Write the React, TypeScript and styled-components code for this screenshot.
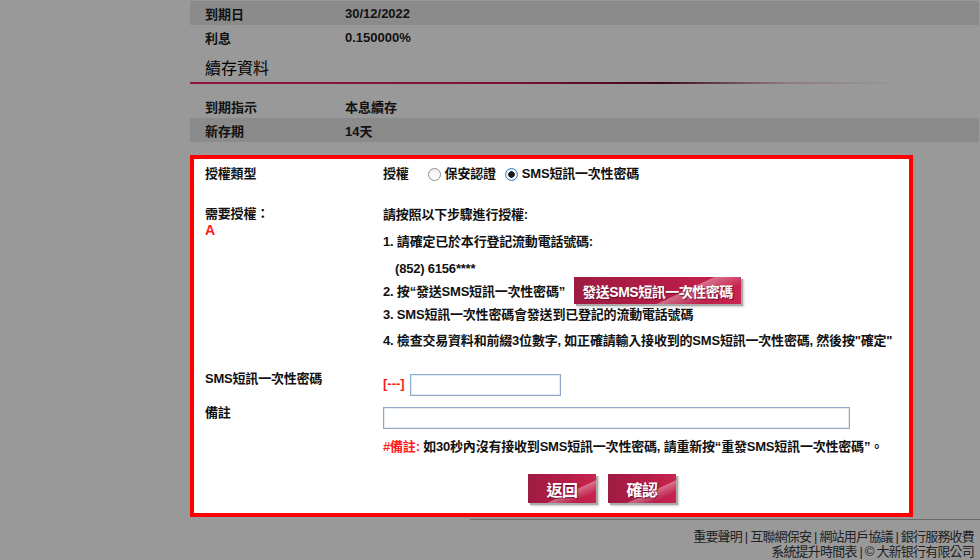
import React from 'react';
import styled, { createGlobalStyle } from 'styled-components';

const GlobalStyle = createGlobalStyle`
  html, body {
    margin: 0;
    padding: 0;
    background: #999999;
  }
  body {
    font-family: "Liberation Sans", "Noto Sans CJK TC", sans-serif;
    color: #111;
  }
`;

const Page = styled.div`
  width: 980px;
  height: 560px;
  overflow: hidden;
  padding-left: 190px;
  padding-top: 1px;
  box-sizing: border-box;
`;

const Content = styled.div`
  width: 789px;
`;

const InfoRow = styled.div<{ $shaded?: boolean }>`
  display: flex;
  align-items: center;
  height: 24px;
  background: ${(p) => (p.$shaded ? '#8b8b8b' : 'transparent')};
  font-size: 13px;
  font-weight: bold;
`;

const InfoLabel = styled.div`
  width: 140px;
  padding-left: 15px;
`;

const InfoValue = styled.div`
  flex: 1;
`;

const SectionTitle = styled.h3`
  margin: 10px 0 0;
  padding-left: 15px;
  font-size: 16px;
  line-height: 20px;
  font-weight: normal;
  color: #000;
`;

const TitleRule = styled.div`
  height: 2px;
  margin: 3px 0 10px;
  background: linear-gradient(
    to right,
    #8e1640 0%,
    #7a1236 40%,
    #3d0a1c 60%,
    rgba(120, 60, 80, 0.35) 75%,
    rgba(153, 153, 153, 0) 90%
  );
`;

const AuthBox = styled.div`
  margin-top: 13px;
  width: 723px;
  box-sizing: border-box;
  border: 4px solid #ff0000;
  background: #ffffff;
  padding: 7px 0 10px 11px;
  font-size: 13px;
  font-weight: bold;
  letter-spacing: -0.2px;
  color: #111;
`;

const FormRow = styled.div<{ $gap?: number }>`
  display: flex;
  align-items: flex-start;
  margin-top: ${(p) => p.$gap ?? 0}px;
  line-height: 16px;
`;

const FormLabel = styled.div`
  width: 178px;
  flex-shrink: 0;
`;

const FormValue = styled.div`
  flex: 1;
`;

const RedMark = styled.div`
  color: #ff1a1a;
  font-size: 14px;
  line-height: 16px;
`;

const RadioGroup = styled.div`
  display: flex;
  align-items: center;
`;

const RadioText = styled.span`
  margin-left: 0;
`;

const RadioDot = styled.span<{ $checked?: boolean }>`
  display: inline-block;
  box-sizing: border-box;
  width: 13px;
  height: 13px;
  border-radius: 50%;
  border: 1px solid ${(p) => (p.$checked ? '#3d7bad' : '#8e8f8f')};
  background: ${(p) =>
    p.$checked
      ? 'radial-gradient(circle, #1b1b1b 0 3px, #ffffff 3.5px 4px, #dbeefd 4.5px)'
      : 'linear-gradient(#f0f0f0, #ffffff)'};
  margin-left: ${(p) => (p.$checked ? 9 : 19)}px;
  margin-right: 4px;
`;

const Step = styled.div<{ $gap?: number; $indent?: number }>`
  margin-top: ${(p) => p.$gap ?? 0}px;
  padding-left: ${(p) => p.$indent ?? 0}px;
  line-height: 16px;
`;

const StepWithButton = styled.div<{ $gap?: number }>`
  display: flex;
  align-items: center;
  height: 27px;
  margin-top: ${(p) => p.$gap ?? 0}px;
`;

const CrimsonButton = styled.button<{ $w: number; $h: number; $size: number }>`
  width: ${(p) => p.$w}px;
  height: ${(p) => p.$h}px;
  border: none;
  padding: 0;
  cursor: pointer;
  white-space: nowrap;
  color: #ffffff;
  font-family: "Liberation Sans", "Noto Sans CJK TC", sans-serif;
  font-size: ${(p) => p.$size}px;
  font-weight: bold;
  letter-spacing: -0.5px;
  text-shadow: 1px 1px 1px rgba(60, 0, 20, 0.6);
  background:
    linear-gradient(155deg, rgba(255, 255, 255, 0) 62%, rgba(255, 255, 255, 0.35) 63%, rgba(255, 255, 255, 0) 82%),
    linear-gradient(to right, #9e1b42 0%, #b71d48 60%, #c8244f 100%);
  box-shadow: 2px 2px 0 #a9a9a9, 3px 3px 2px rgba(0, 0, 0, 0.2);
`;

const SendButton = styled(CrimsonButton)`
  margin-left: 9px;
  margin-top: -2px;
`;

const OtpPrefix = styled.span`
  color: #ff1a1a;
  margin-top: 5px;
  margin-right: 5px;
  letter-spacing: 0;
`;

const OtpField = styled.div`
  display: flex;
  align-items: flex-start;
`;

const TextBox = styled.input<{ $w: number; $top: number }>`
  width: ${(p) => p.$w}px;
  height: 22px;
  margin-top: ${(p) => p.$top}px;
  box-sizing: border-box;
  border: 1px solid #8fa8c3;
  box-shadow: inset 0 0 0 1px #e3ebf3;
  padding: 0 4px;
  font-size: 13px;
  outline: none;
  background: #ffffff;
`;

const Note = styled.div`
  margin-top: 10px;
  line-height: 16px;
`;

const NoteTag = styled.span`
  color: #ff1a1a;
`;

const ActionRow = styled.div`
  display: flex;
  gap: 12px;
  margin-top: 19px;
  margin-left: 145px;
`;

const Footer = styled.footer`
  margin-top: 2px;
  margin-left: 280px;
  width: 510px;
  border-top: 1px solid #6b6b6b;
  padding: 9px 6px 0 0;
  box-sizing: border-box;
  text-align: right;
  font-size: 13px;
  letter-spacing: -0.8px;
  line-height: 15px;
  color: #222;
`;

const App: React.FC = () => {
  return (
    <>
      <GlobalStyle />
      <Page>
        <Content>
          <InfoRow $shaded>
            <InfoLabel>到期日</InfoLabel>
            <InfoValue>30/12/2022</InfoValue>
          </InfoRow>
          <InfoRow>
            <InfoLabel>利息</InfoLabel>
            <InfoValue>0.150000%</InfoValue>
          </InfoRow>

          <SectionTitle>續存資料</SectionTitle>
          <TitleRule />

          <InfoRow>
            <InfoLabel>到期指示</InfoLabel>
            <InfoValue>本息續存</InfoValue>
          </InfoRow>
          <InfoRow $shaded>
            <InfoLabel>新存期</InfoLabel>
            <InfoValue>14天</InfoValue>
          </InfoRow>

          <AuthBox>
            <FormRow>
              <FormLabel>授權類型</FormLabel>
              <FormValue>
                <RadioGroup>
                  <span>授權</span>
                  <RadioDot />
                  <RadioText>保安認證</RadioText>
                  <RadioDot $checked />
                  <RadioText>SMS短訊一次性密碼</RadioText>
                </RadioGroup>
              </FormValue>
            </FormRow>

            <FormRow $gap={24}>
              <FormLabel>
                需要授權：
                <RedMark>A</RedMark>
              </FormLabel>
              <FormValue>
                <Step $gap={1}>請按照以下步驟進行授權:</Step>
                <Step $gap={11}>1. 請確定已於本行登記流動電話號碼:</Step>
                <Step $gap={11} $indent={12}>(852) 6156****</Step>
                <StepWithButton $gap={1}>
                  2. 按“發送SMS短訊一次性密碼”
                  <SendButton $w={167} $h={27} $size={14}>發送SMS短訊一次性密碼</SendButton>
                </StepWithButton>
                <Step $gap={2}>3. SMS短訊一次性密碼會發送到已登記的流動電話號碼</Step>
                <Step $gap={10}>4. 檢查交易資料和前綴3位數字, 如正確請輸入接收到的SMS短訊一次性密碼, 然後按"確定"</Step>
              </FormValue>
            </FormRow>

            <FormRow $gap={22}>
              <FormLabel>SMS短訊一次性密碼</FormLabel>
              <FormValue>
                <OtpField>
                  <OtpPrefix>[---]</OtpPrefix>
                  <TextBox $w={151} $top={3} />
                </OtpField>
              </FormValue>
            </FormRow>

            <FormRow $gap={9}>
              <FormLabel>備註</FormLabel>
              <FormValue>
                <TextBox $w={467} $top={2} />
                <Note>
                  <NoteTag>#備註:</NoteTag> 如30秒內沒有接收到SMS短訊一次性密碼, 請重新按“重發SMS短訊一次性密碼”。
                </Note>
                <ActionRow>
                  <CrimsonButton $w={68} $h={29} $size={16}>返回</CrimsonButton>
                  <CrimsonButton $w={68} $h={29} $size={16}>確認</CrimsonButton>
                </ActionRow>
              </FormValue>
            </FormRow>
          </AuthBox>

          <Footer>
            <div>重要聲明 | 互聯網保安 | 網站用戶協議 | 銀行服務收費</div>
            <div>系統提升時間表 | © 大新银行有限公司</div>
          </Footer>
        </Content>
      </Page>
    </>
  );
};

export default App;
